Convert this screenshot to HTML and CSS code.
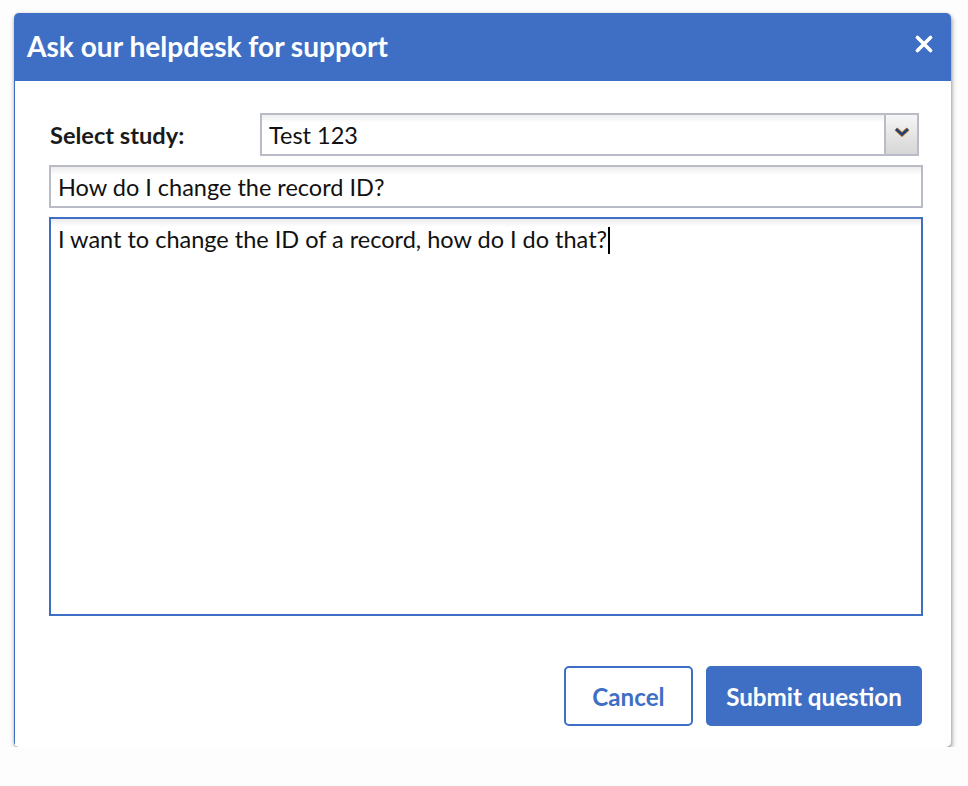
FILE: index.html
```html
<!DOCTYPE html>
<html>
<head>
<meta charset="utf-8">
<link rel="stylesheet" href="styles.css">
</head>
<body>
<div class="dialog">
  <div class="dialog-header">
    <h1 class="dialog-title">Ask our helpdesk for support</h1>
    <button class="close" aria-label="Close">
      <svg width="18" height="18" viewBox="0 0 18 18"><path d="M2.5 2.5 L15.5 15.5 M15.5 2.5 L2.5 15.5" stroke="#fff" stroke-width="3.6" stroke-linecap="round"/></svg>
    </button>
  </div>
  <div class="dialog-body">
    <div class="study-row">
      <label class="study-label">Select study:</label>
      <div class="select">
        <span class="select-value">Test 123</span>
        <span class="select-arrow">
          <svg width="16" height="10" viewBox="0 0 16 10"><path d="M2 2 L8 7.5 L14 2" fill="none" stroke="#c98a2e" stroke-width="4.2" stroke-linejoin="miter"/><path d="M2 2 L8 7.5 L14 2" fill="none" stroke="#263f73" stroke-width="2.6"/></svg>
        </span>
      </div>
    </div>
    <div class="field subject">How do I change the record ID?</div>
    <div class="field message">I want to change the ID of a record, how do I do that?<span class="caret"></span></div>
    <div class="actions">
      <button class="btn btn-outline">Cancel</button>
      <button class="btn btn-primary">Submit question</button>
    </div>
  </div>
</div>
</body>
</html>
```
FILE: styles.css
```css
html, body {
  margin: 0;
  padding: 0;
  background: #fdfdfd;
}
body {
  padding: 13px 17px 0 14px;
  font-family: Lato, "Open Sans", sans-serif;
  color: #111;
}
.dialog {
  width: 937px;
  height: 734px;
  display: flex;
  flex-direction: column;
  background: #fff;
  border-radius: 5px;
  box-shadow: 1px 3px 5px rgba(0,0,0,0.38), 0 0 3px rgba(0,0,0,0.12);
  overflow: hidden;
}
.dialog-header {
  height: 68px;
  flex: none;
  background: #3f6fc5;
  display: flex;
  align-items: center;
  justify-content: space-between;
  padding: 0 18px 0 13px;
}
.dialog-title {
  margin: 0;
  color: #fff;
  font-size: 28.1px;
  font-weight: 700;
  padding-bottom: 3px;
}
.close {
  border: 0;
  background: none;
  padding: 0;
  width: 18px;
  height: 18px;
  display: flex;
  margin-top: -6px;
}
.dialog-body {
  flex: 1;
  display: flex;
  flex-direction: column;
  border-left: 1px solid #3f6fc5;
  padding: 32px 28px 21px 34px;
}
.study-row {
  display: flex;
  align-items: center;
  height: 43px;
  padding-right: 4px;
}
.study-label {
  width: 210px;
  padding-left: 1px;
  font-size: 23.6px;
  font-weight: 700;
  color: #1a1a1a;
}
.select {
  flex: 1;
  height: 43px;
  box-sizing: border-box;
  border: 2px solid #b9bbc6;
  display: flex;
  align-items: stretch;
  background: linear-gradient(#efefef, #fff 8px);
}
.select-value {
  flex: 1;
  font-size: 23.5px;
  padding-left: 7px;
  display: flex;
  align-items: center;
}
.select-arrow {
  width: 33px;
  border-left: 2px solid #b9bbc6;
  background: linear-gradient(#f6f6f6, #e2e2e2 60%, #d6d6d6);
  display: flex;
  align-items: center;
  justify-content: center;
  padding-bottom: 6px;
  box-sizing: border-box;
}
.field {
  box-sizing: border-box;
  border: 2px solid #b9bbc6;
  font-size: 23.5px;
  padding: 0 7px;
  background: linear-gradient(#ececec, #fff 8px);
}
.subject {
  margin-top: 9px;
  height: 43px;
  display: flex;
  align-items: center;
}
.message {
  margin-top: 9px;
  height: 399px;
  border-color: #3f6fc5;
  padding-top: 6px;
  line-height: 29px;
}
.caret {
  display: inline-block;
  width: 2px;
  height: 27px;
  background: #000;
  vertical-align: -6px;
  margin-left: 1px;
}
.actions {
  margin-top: auto;
  display: flex;
  justify-content: flex-end;
  gap: 13px;
  padding-right: 1px;
}
.btn {
  font-family: Lato, "Open Sans", sans-serif;
  font-size: 24.2px;
  font-weight: 700;
  height: 60px;
  border-radius: 5px;
  box-sizing: border-box;
  cursor: pointer;
  padding: 0;
}
.btn-outline {
  width: 129px;
  background: #fff;
  color: #3f6fc5;
  border: 2px solid #3f6fc5;
}
.btn-primary {
  width: 216px;
  background: #3f6fc5;
  color: #fff;
  border: 2px solid #3f6fc5;
}
```
